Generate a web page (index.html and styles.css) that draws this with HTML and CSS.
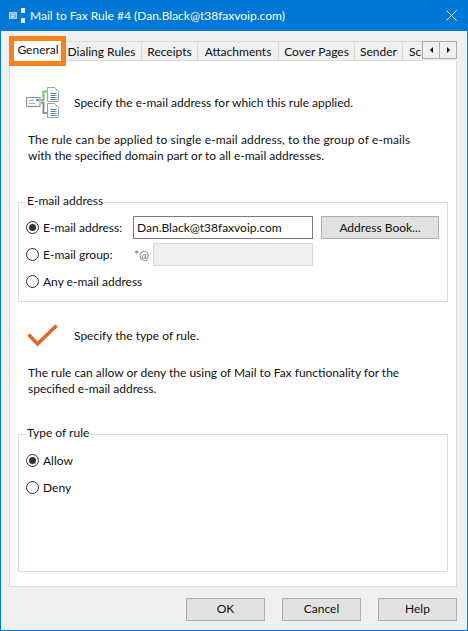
FILE: index.html
```html
<!DOCTYPE html>
<html lang="en">
<head>
  <meta charset="UTF-8">
  <meta name="viewport" content="width=device-width, initial-scale=1.0">
  <title>Mail to Fax Rule #4</title>
  <link rel="stylesheet" href="styles.css">
</head>
<body>
  <div class="window">
    <div class="titlebar">
      <svg class="title-icon" width="17" height="16" viewBox="0 0 17 16">
        <rect x="0.500" y="4.500" width="7" height="6" fill="#6fb0e8" stroke="#b9d8f3"/>
        <path d="M2 6.500h4M2 8.500h3" stroke="#d9eafa"/>
        <rect x="12" y="0" width="4" height="5" fill="#e4eef8"/>
        <rect x="12" y="10" width="4" height="5" fill="#e4eef8"/>
      </svg>
      <span class="title-text">Mail to Fax Rule #4 (Dan.Black@t38faxvoip.com)</span>
      <svg class="title-close" width="11" height="11" viewBox="0 0 11 11">
        <path d="M0.500 0.500l10 10M10.500 0.500l-10 10" stroke="#fff" stroke-width="1"/>
      </svg>
    </div>

    <div class="client">
      <div class="tabs">
        <div class="tab tab-active">General</div>
        <div class="tab tab-dialing">Dialing Rules</div>
        <div class="tab tab-receipts">Receipts</div>
        <div class="tab tab-attach">Attachments</div>
        <div class="tab tab-cover">Cover Pages</div>
        <div class="tab tab-sender">Sender</div>
        <div class="tab tab-cut">Sc</div>
        <div class="tab-scroll">
          <div class="scroll-btn"><span class="arrow-left"></span></div>
          <div class="scroll-btn"><span class="arrow-right"></span></div>
        </div>
        <div class="highlight"></div>
      </div>

      <div class="panel">
        <div class="intro intro-mail">
          <svg class="icon-mail" width="33" height="32" viewBox="0 0 33 32">
            <rect x="0.500" y="10.500" width="13.500" height="9" fill="#f6f6f6" stroke="#8f8f8f"/>
            <path d="M3 13.500h5M3 16.500h6" stroke="#b0b0b0"/>
            <rect x="10" y="12" width="3" height="2" fill="#6a8db0"/>
            <path d="M15 13h2.500V4.500H21" fill="none" stroke="#7cc05c" stroke-width="2"/>
            <path d="M15 15.500h2.500V26H21" fill="none" stroke="#8f8f8f" stroke-width="2"/>
            <path d="M21.500 0.500h7l4 4v10h-11zM21.500 16.500h7l4 4v10h-11z" fill="#fff" stroke="#a0a0a0"/>
            <path d="M24.500 6.500h6M24.500 8.500h6M24.500 10.500h6M24.500 12.500h6M24.500 22.500h6M24.500 24.500h6M24.500 26.500h6M24.500 28.500h6" stroke="#4a8fb8"/>
          </svg>
          <span class="intro-text">Specify the e-mail address for which this rule applied.</span>
        </div>
        <p class="desc desc-mail"><span class="wide-line">The rule can be applied to single e-mail address, to the group of e-mails</span><br>with the specified domain part or to all e-mail addresses.</p>

        <fieldset class="group group-mail">
          <legend>E-mail address</legend>
          <div class="field-row row-address">
            <span class="radio radio-on"></span>
            <label class="radio-label label-wide">E-mail address:</label>
            <div class="input">Dan.Black@t38faxvoip.com</div>
            <div class="btn btn-book">Address Book...</div>
          </div>
          <div class="field-row row-group">
            <span class="radio"></span>
            <label class="radio-label label-group">E-mail group:</label>
            <span class="at-sign">*@</span>
            <div class="input input-disabled"></div>
          </div>
          <div class="field-row row-any">
            <span class="radio"></span>
            <label class="radio-label">Any e-mail address</label>
          </div>
        </fieldset>

        <div class="intro intro-type">
          <svg class="icon-check" width="31" height="23" viewBox="0 0 31 23">
            <path d="M1.500 10.500l9 9.500L29.500 1.500" fill="none" stroke="#e2652a" stroke-width="3.500"/>
          </svg>
          <span>Specify the type of rule.</span>
        </div>
        <p class="desc desc-type">The rule can allow or deny the using of Mail to Fax functionality for the<br>specified e-mail address.</p>

        <fieldset class="group group-type">
          <legend>Type of rule</legend>
          <div class="field-row row-allow">
            <span class="radio radio-on"></span>
            <label class="radio-label">Allow</label>
          </div>
          <div class="field-row row-deny">
            <span class="radio"></span>
            <label class="radio-label">Deny</label>
          </div>
        </fieldset>
      </div>

      <div class="footer">
        <div class="btn btn-footer">OK</div>
        <div class="btn btn-footer">Cancel</div>
        <div class="btn btn-footer">Help</div>
      </div>
    </div>
  </div>
</body>
</html>
```

FILE: styles.css
```css
html, body {
  margin: 0;
  padding: 0;
  height: 100%;
  background-color: #F0F0F0;
  color: #111;
  font-family: 'Lato', 'Open Sans', sans-serif;
  font-size: 12px;
  overflow: hidden;
}

.wide-line {
  letter-spacing: 0.12px;
}

.window {
  box-sizing: border-box;
  width: 468px;
  height: 631px;
  border: 1px solid #0078D7;
  border-top: none;
  display: flex;
  flex-direction: column;
}

.titlebar {
  height: 31px;
  flex-shrink: 0;
  background: #0078D7;
  color: #fff;
  display: flex;
  align-items: center;
  padding-left: 8px;
  padding-right: 10px;
}

.title-icon {
  margin-right: 4px;
}

.title-text {
  flex-grow: 1;
}

.client {
  flex-grow: 1;
  display: flex;
  flex-direction: column;
  padding: 0 10px 0 8px;
}

.tabs {
  position: relative;
  display: flex;
  height: 20px;
  margin-top: 10px;
  padding-left: 5px;
  overflow: visible;
}

.tab {
  box-sizing: border-box;
  height: 20px;
  line-height: 20px;
  text-align: center;
  border: 1px solid #d9d9d9;
  border-left: none;
  background: #F0F0F0;
}

.tab-active {
  width: 48px;
  height: 22px;
  margin-top: -2px;
  background: #fff;
  border: none;
  position: relative;
  z-index: 1;
  line-height: 21px;
}

.tab-dialing { width: 80px; }
.tab-receipts { width: 56px; }
.tab-attach { width: 81px; }
.tab-cover { width: 76px; }
.tab-sender { width: 48px; }

.tab-cut {
  width: 19px;
  text-align: left;
  padding-left: 6px;
  overflow: hidden;
  border-right: none;
}

.tab-scroll {
  position: absolute;
  left: 413px;
  top: 0;
  display: flex;
}

.scroll-btn {
  box-sizing: border-box;
  width: 18px;
  height: 18px;
  background: #F0F0F0;
  border: 1px solid #adadad;
  margin-right: -1px;
  display: flex;
  align-items: center;
  justify-content: center;
}

.arrow-left, .arrow-right {
  width: 0;
  height: 0;
  border-top: 3px solid transparent;
  border-bottom: 3px solid transparent;
}

.arrow-left { border-right: 3px solid #111; }
.arrow-right { border-left: 3px solid #111; }

.highlight {
  position: absolute;
  left: 0;
  top: -5px;
  width: 57px;
  height: 30px;
  box-sizing: border-box;
  border: 5px solid #F5821F;
  z-index: 2;
}

.panel {
  box-sizing: border-box;
  height: 526px;
  background: #fff;
  border: 1px solid #d9d9d9;
  border-top: none;
  display: flex;
  flex-direction: column;
  padding: 0 8px;
}

.intro {
  display: flex;
  align-items: center;
}

.intro-mail {
  margin-top: 26px;
  margin-left: 8px;
}

.intro-text {
  margin-bottom: 2px;
}

.icon-mail {
  margin-right: 15px;
}

.intro-type {
  margin-top: 22px;
  margin-left: 9px;
}

.icon-check {
  margin-right: 16px;
}

.desc {
  margin: 0;
  line-height: 16px;
  padding-left: 10px;
}

.desc-mail { margin-top: 13px; }
.desc-type { margin-top: 18px; }

.group {
  margin: 0;
  padding: 0;
  min-width: 0;
  border: 1px solid #dcdcdc;
  display: flex;
  flex-direction: column;
}

.group legend {
  padding: 0 1px 2px;
  margin-left: 7px;
  line-height: 14px;
}

.group-mail {
  height: 108px;
  margin-top: 30px;
  box-sizing: border-box;
}

.group-type {
  height: 146px;
  margin-top: 29px;
  box-sizing: border-box;
}

.field-row {
  display: flex;
  align-items: center;
  height: 23px;
  padding-left: 7px;
}

.row-address { margin-top: 6px; }
.row-group { margin-top: 4px; }
.row-any { margin-top: 4px; }
.row-allow { margin-top: 7px; }
.row-deny { margin-top: 4px; }

.radio {
  box-sizing: border-box;
  width: 13px;
  height: 13px;
  border: 1px solid #333;
  border-radius: 50%;
  background: #fff;
  flex-shrink: 0;
  display: flex;
  align-items: center;
  justify-content: center;
  margin-right: 4px;
}

.radio-on::after {
  content: "";
  width: 7px;
  height: 7px;
  border-radius: 50%;
  background: #333;
}

.label-wide { width: 90px; }
.label-group { width: 91px; }

.at-sign {
  width: 19px;
  color: #6d6d6d;
}

.input {
  box-sizing: border-box;
  width: 180px;
  height: 23px;
  line-height: 21px;
  padding-left: 3px;
  border: 1px solid #7a7a7a;
  background: #fff;
}

.input-disabled {
  width: 160px;
  border-color: #d9d9d9;
  background: #F0F0F0;
}

.btn {
  box-sizing: border-box;
  height: 23px;
  line-height: 21px;
  text-align: center;
  background: #E1E1E1;
  border: 1px solid #ADADAD;
}

.btn-book {
  width: 118px;
  margin-left: 8px;
}

.footer {
  display: flex;
  justify-content: flex-end;
  gap: 17px;
  margin-top: 11px;
}

.btn-footer {
  width: 79px;
  line-height: 19px;
}
```
